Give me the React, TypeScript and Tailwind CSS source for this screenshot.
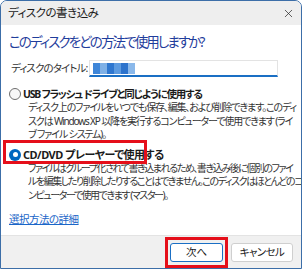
import { X } from 'lucide-react';

// Mosaic blocks standing in for the blurred, selected disc title
const mosaic = ['#3f86d8', '#7eb0e6', '#2f77cf', '#5d9be0', '#2d73cc', '#8ab8ea'];

const desc1 = [
  'ディスク上のファイルをいつでも保存、編集、および削除できます。このディ',
  'スクは Windows XP 以降を実行するコンピューターで使用できます (ライ',
  'ブ ファイル システム)。'
];

const desc2 = [
  'ファイルはグループ化されて書き込まれるため、書き込み後に個別のファイ',
  'ルを編集したり削除したりすることはできません。このディスクはほとんどのコ',
  'ンピューターで使用できます (マスター)。'
];

function Radio({ checked }: { checked?: boolean }) {
  if (checked) {
    return (
      <span className="w-[12px] h-[12px] rounded-full bg-[#0067c0] flex items-center justify-center shrink-0">
        <span className="w-[5px] h-[5px] rounded-full bg-white" />
      </span>
    );
  }
  return <span className="w-[12px] h-[12px] rounded-full border border-[#6e6e6e] bg-[#f7f7f7] shrink-0" />;
}

export default function App() {
  return (
    <div
      className="w-[302px] h-[269px] flex flex-col border border-[#3c6ea8] rounded-t-[7px] overflow-hidden bg-white text-[#1b1b1b]"
      style={{ fontFamily: '"Noto Sans", "Noto Sans CJK JP", sans-serif', fontFeatureSettings: '"palt"' }}
    >
      {/* Title bar */}
      <div className="h-[24px] shrink-0 bg-[#eeeeee] flex items-center justify-between pl-[7px] pr-[6px]">
        <span className="text-[11.5px] leading-none tracking-[-0.5px]">ディスクの書き込み</span>
        <X size={13} strokeWidth={1.3} className="text-[#222]" />
      </div>

      {/* Body */}
      <div className="relative flex-1 flex flex-col pl-[8px] whitespace-nowrap">
        <h1 className="mt-[7px] text-[13.5px] leading-[20px] text-[#1f3d9c] tracking-[-1.9px]">
          このディスクをどの方法で使用しますか?
        </h1>

        <div className="mt-[8px] flex items-center h-[17px] pl-[2px]">
          <span className="text-[10.5px] w-[78px] text-[#333] tracking-[-0.9px]">ディスクのタイトル:</span>
          <div className="w-[189px] h-[17px] bg-white border border-[#e3e3e3] border-b-2 border-b-[#1a6fc4] flex items-center pl-[3px]">
            <div className="flex h-[11px]">
              {mosaic.map((c, i) => (
                <span key={i} className="w-[7px] h-[11px]" style={{ backgroundColor: c }} />
              ))}
            </div>
          </div>
        </div>

        <div className="mt-[10px] flex items-center gap-[2px] h-[14px]">
          <Radio />
          <span className="text-[10.5px] font-bold leading-[14px] tracking-[-1.2px]">
            USB フラッシュ ドライブと同じように使用する
          </span>
        </div>
        <div className="pl-[19px] text-[10px] leading-[13.5px] text-[#333] tracking-[-1.15px]">
          {desc1.map((l) => (
            <div key={l}>{l}</div>
          ))}
        </div>

        <div className="mt-[6px] flex items-center gap-[2px] h-[14px]">
          <Radio checked />
          <span className="text-[11px] font-bold leading-[14px] tracking-[-0.5px]">CD/DVD プレーヤーで使用する</span>
        </div>
        <div className="pl-[19px] text-[10px] leading-[13.5px] text-[#333] tracking-[-1.45px]">
          {desc2.map((l) => (
            <div key={l}>{l}</div>
          ))}
        </div>

        <a className="mt-[10px] w-fit text-[10.5px] leading-[14px] text-[#1a66c8] underline tracking-[-0.5px]">選択方法の詳細</a>

        {/* red annotation around the chosen option */}
        <div className="absolute left-[2px] top-[115px] w-[144px] h-[24px] border-[3px] border-[#e50f1a]" />
      </div>

      {/* Footer */}
      <div className="h-[33px] shrink-0 bg-[#f0f0f0] border-t border-[#e3e3e3] relative flex items-start justify-end gap-[8px] pt-[7px] pr-[8px]">
        <button className="w-[53px] h-[19px] rounded-[3px] bg-white border border-[#1a6fc4] text-[10.5px] leading-none">次へ</button>
        <button className="w-[62px] h-[19px] rounded-[3px] bg-white border border-[#cfcfcf] text-[10.5px] leading-none tracking-[-0.6px]">キャンセル</button>
        <div className="absolute left-[164px] top-[1px] w-[63px] h-[31px] border-[3px] border-[#e50f1a]" />
      </div>
    </div>
  );
}
